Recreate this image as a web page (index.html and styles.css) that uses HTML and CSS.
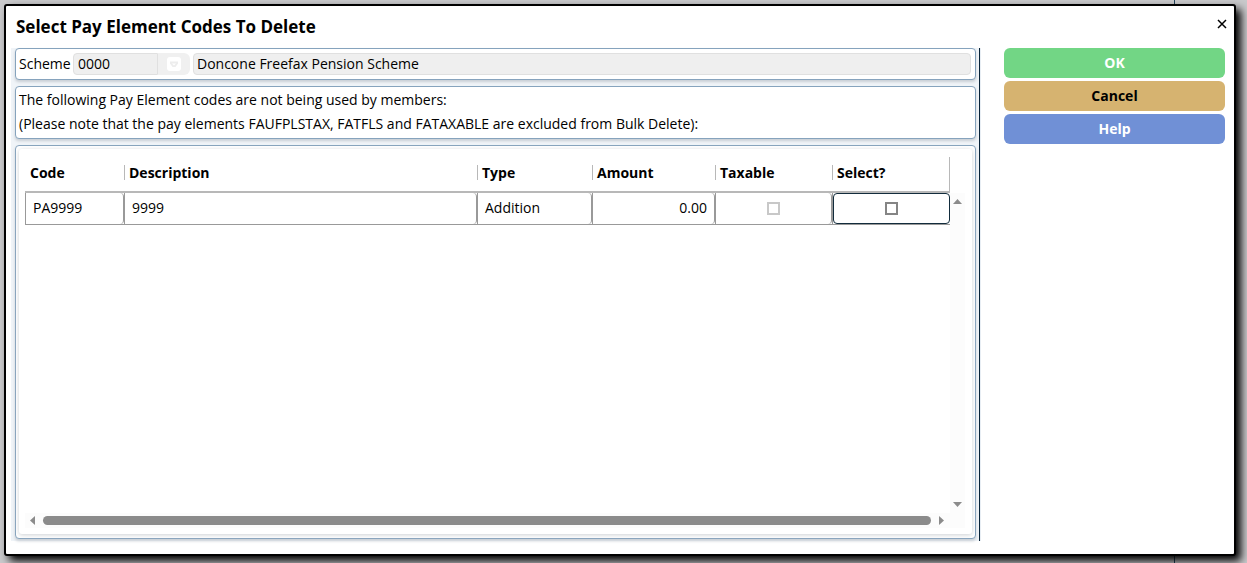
FILE: index.html
```html
<!DOCTYPE html>
<html lang="en">
<head>
<meta charset="utf-8">
<title>Select Pay Element Codes To Delete</title>
<link rel="stylesheet" href="styles.css">
</head>
<body>
<div class="backdrop"></div>
<section class="dialog" role="dialog" aria-labelledby="dialog-title">
  <header class="dialog-header">
    <h1 class="dialog-title" id="dialog-title">Select Pay Element Codes To Delete</h1>
    <button class="close" type="button" aria-label="Close">
      <svg width="10" height="10" viewBox="0 0 10 10"><path d="M1 1l8 8M9 1l-8 8" stroke="#000" stroke-width="1.5" fill="none"/></svg>
    </button>
  </header>
  <div class="dialog-body">
    <main class="content">
      <div class="panel scheme">
        <label class="scheme-label" for="scheme">Scheme</label>
        <input class="field code" id="scheme" type="text" value="0000" readonly>
        <button class="lookup" type="button" disabled aria-label="Look up scheme">
          <svg width="14" height="14" viewBox="0 0 14 14"><rect width="14" height="14" rx="3" fill="#fff"/><path d="M3 4.500h8v2L8.500 10h-3L3 6.500z" fill="#ededed"/><path d="M5 6.500h4L7 8.500z" fill="#fff"/></svg>
        </button>
        <input class="field name" type="text" value="Doncone Freefax Pension Scheme" aria-label="Scheme name" readonly>
      </div>
      <div class="panel note">
        <p>The following Pay Element codes are not being used by members:</p>
        <p>(Please note that the pay elements FAUFPLSTAX, FATFLS and FATAXABLE are excluded from Bulk Delete):</p>
      </div>
      <div class="panel list">
        <div class="sheet">
          <div class="table-area">
            <table class="grid">
              <colgroup><col class="c-code"><col><col class="c-type"><col class="c-amount"><col class="c-flag"><col class="c-select"></colgroup>
              <thead>
                <tr><th><span>Code</span></th><th><span>Description</span></th><th><span>Type</span></th><th><span>Amount</span></th><th><span>Taxable</span></th><th><span>Select?</span></th></tr>
              </thead>
              <tbody>
                <tr>
                  <td><div class="cell">PA9999</div></td>
                  <td><div class="cell">9999</div></td>
                  <td><div class="cell">Addition</div></td>
                  <td><div class="cell number">0.00</div></td>
                  <td><div class="cell check"><input type="checkbox" aria-label="Taxable" disabled></div></td>
                  <td><div class="cell check active"><input type="checkbox" aria-label="Select"></div></td>
                </tr>
              </tbody>
            </table>
          </div>
          <div class="vbar">
            <svg width="9" height="5" viewBox="0 0 9 5"><path d="M0 5L4.500 0 9 5z" fill="#8b8b8b"/></svg>
            <svg width="9" height="5" viewBox="0 0 9 5"><path d="M0 0h9L4.500 5z" fill="#8b8b8b"/></svg>
          </div>
          <div class="hbar">
            <svg width="5" height="9" viewBox="0 0 5 9"><path d="M5 0v9L0 4.500z" fill="#8b8b8b"/></svg>
            <div class="thumb"></div>
            <svg width="5" height="9" viewBox="0 0 5 9"><path d="M0 0v9l5-4.500z" fill="#8b8b8b"/></svg>
          </div>
        </div>
      </div>
    </main>
    <aside class="actions">
      <button class="action ok" type="button">OK</button>
      <button class="action cancel" type="button">Cancel</button>
      <button class="action help" type="button">Help</button>
    </aside>
  </div>
</section>
</body>
</html>
```
FILE: styles.css
```css
* { box-sizing: border-box; }
body {
  margin: 0;
  min-height: 100vh;
  padding: 4px 11px 7px 4px;
  display: flex;
  overflow: hidden;
  background: #c9c9cb;
  color: #000;
  font-family: "Open Sans", "Noto Sans", sans-serif;
  font-size: 14px;
  line-height: 24px;
}
h1, p { margin: 0; }
button, input { font: inherit; color: inherit; }
svg { display: block; }
.backdrop {
  position: absolute;
  inset: 0 72px 0 0;
  border-right: 1px solid #24445c;
}
.dialog {
  position: relative;
  flex: 1;
  display: flex;
  flex-direction: column;
  background: #fff;
  border: 2px solid #000;
  border-radius: 3px;
  box-shadow: 5px 5px 9px #000;
}
.dialog-header {
  display: flex;
  justify-content: space-between;
  padding: 9px 7px 9px 10px;
}
.dialog-title { font-size: 17px; line-height: 24px; font-weight: 700; }
.close {
  align-self: center;
  padding: 0;
  margin-bottom: 6px;
  border: 0;
  background: none;
}
.dialog-body { flex: 1; display: flex; padding: 0 9px 13px 5px; }
.content {
  flex: 1;
  min-width: 0;
  display: flex;
  flex-direction: column;
  gap: 6px;
  padding: 0 3px 2px 4px;
  background: #f0f4f8;
  border-right: 1px solid #062238;
  box-shadow: 1px 0 0 #e8eef4;
}
.panel {
  background: #fff;
  border: 1px solid #86a3bd;
  border-radius: 4px;
  box-shadow: 0 2px 3px #c8ced4;
}
.scheme { display: flex; align-items: center; height: 32px; padding: 0 4px 0 3px; }
.scheme-label { width: 54px; }
.field {
  height: 22px;
  padding: 0 3px;
  border: 1px solid #e0e0e0;
  background: #efefef;
  min-width: 0;
}
.code { width: 85px; padding-left: 4px; border-radius: 4px 0 0 4px; }
.lookup {
  display: grid;
  place-items: center;
  width: 32px;
  height: 22px;
  padding: 0;
  margin-right: 3px;
  border: 0;
  border-radius: 0 6px 6px 0;
  background: #f0f0f0;
}
.name { flex: 1; border-radius: 4px; }
.note { padding: 1px 3px 2px; }
.list { flex: 1; display: flex; padding: 3px 3px 4px; }
.sheet {
  flex: 1;
  display: grid;
  grid-template-columns: 1fr 15px;
  grid-template-rows: 1fr 15px;
  padding: 8px 7px 6px 6px;
  border-radius: 3px;
  box-shadow: 0 1px 4px #ccd0d4;
}
.grid { width: 100%; table-layout: fixed; border-collapse: separate; border-spacing: 0; }
.c-code { width: 99px; }
.c-type { width: 115px; }
.c-amount { width: 123px; }
.c-flag { width: 117px; }
.c-select { width: 118px; }
.grid th {
  height: 36px;
  padding: 0 0 3px;
  text-align: left;
  font-weight: 700;
  border-bottom: 2px solid #b8b8b8;
}
.grid th span {
  display: block;
  padding-left: 4px;
  line-height: 15px;
  border-left: 1px solid #b8b8b8;
}
.grid th:first-child span { border-left-color: transparent; }
.grid th:last-child { border-right: 1px solid #b8b8b8; }
.grid td { padding: 0; border-bottom: 1px solid #999; border-left: 1px solid #999; }
.cell {
  height: 31px;
  padding: 0 7px;
  line-height: 30px;
  border-right: 1px solid #999;
  border-radius: 4px;
}
.number { text-align: right; }
.check { display: grid; place-items: center; }
.active { border: 1px solid #122c3c; }
.check input {
  appearance: none;
  width: 13px;
  height: 13px;
  margin: 0;
  border: 2px solid #858585;
  background: #fff;
}
.check input:disabled { border-color: #c8c8c8; }
.vbar {
  display: flex;
  flex-direction: column;
  justify-content: space-between;
  align-items: center;
  margin-top: 36px;
  padding: 6px 0;
  background: #fcfcfc;
}
.hbar {
  grid-column: 1 / 3;
  display: flex;
  align-items: center;
  gap: 8px;
  padding: 0 21px 0 5px;
  background: #fcfcfc;
}
.thumb { flex: 1; height: 9px; border-radius: 5px; background: #8b8b8b; }
.actions {
  display: flex;
  flex-direction: column;
  gap: 3px;
  width: 245px;
  padding-left: 24px;
}
.action {
  height: 30px;
  padding: 0;
  border: 0;
  border-radius: 6px;
  font-weight: 700;
  color: #fff;
}
.ok { background: #72d685; }
.cancel { background: #d6b370; color: #000; }
.help { background: #7090d6; }
```
